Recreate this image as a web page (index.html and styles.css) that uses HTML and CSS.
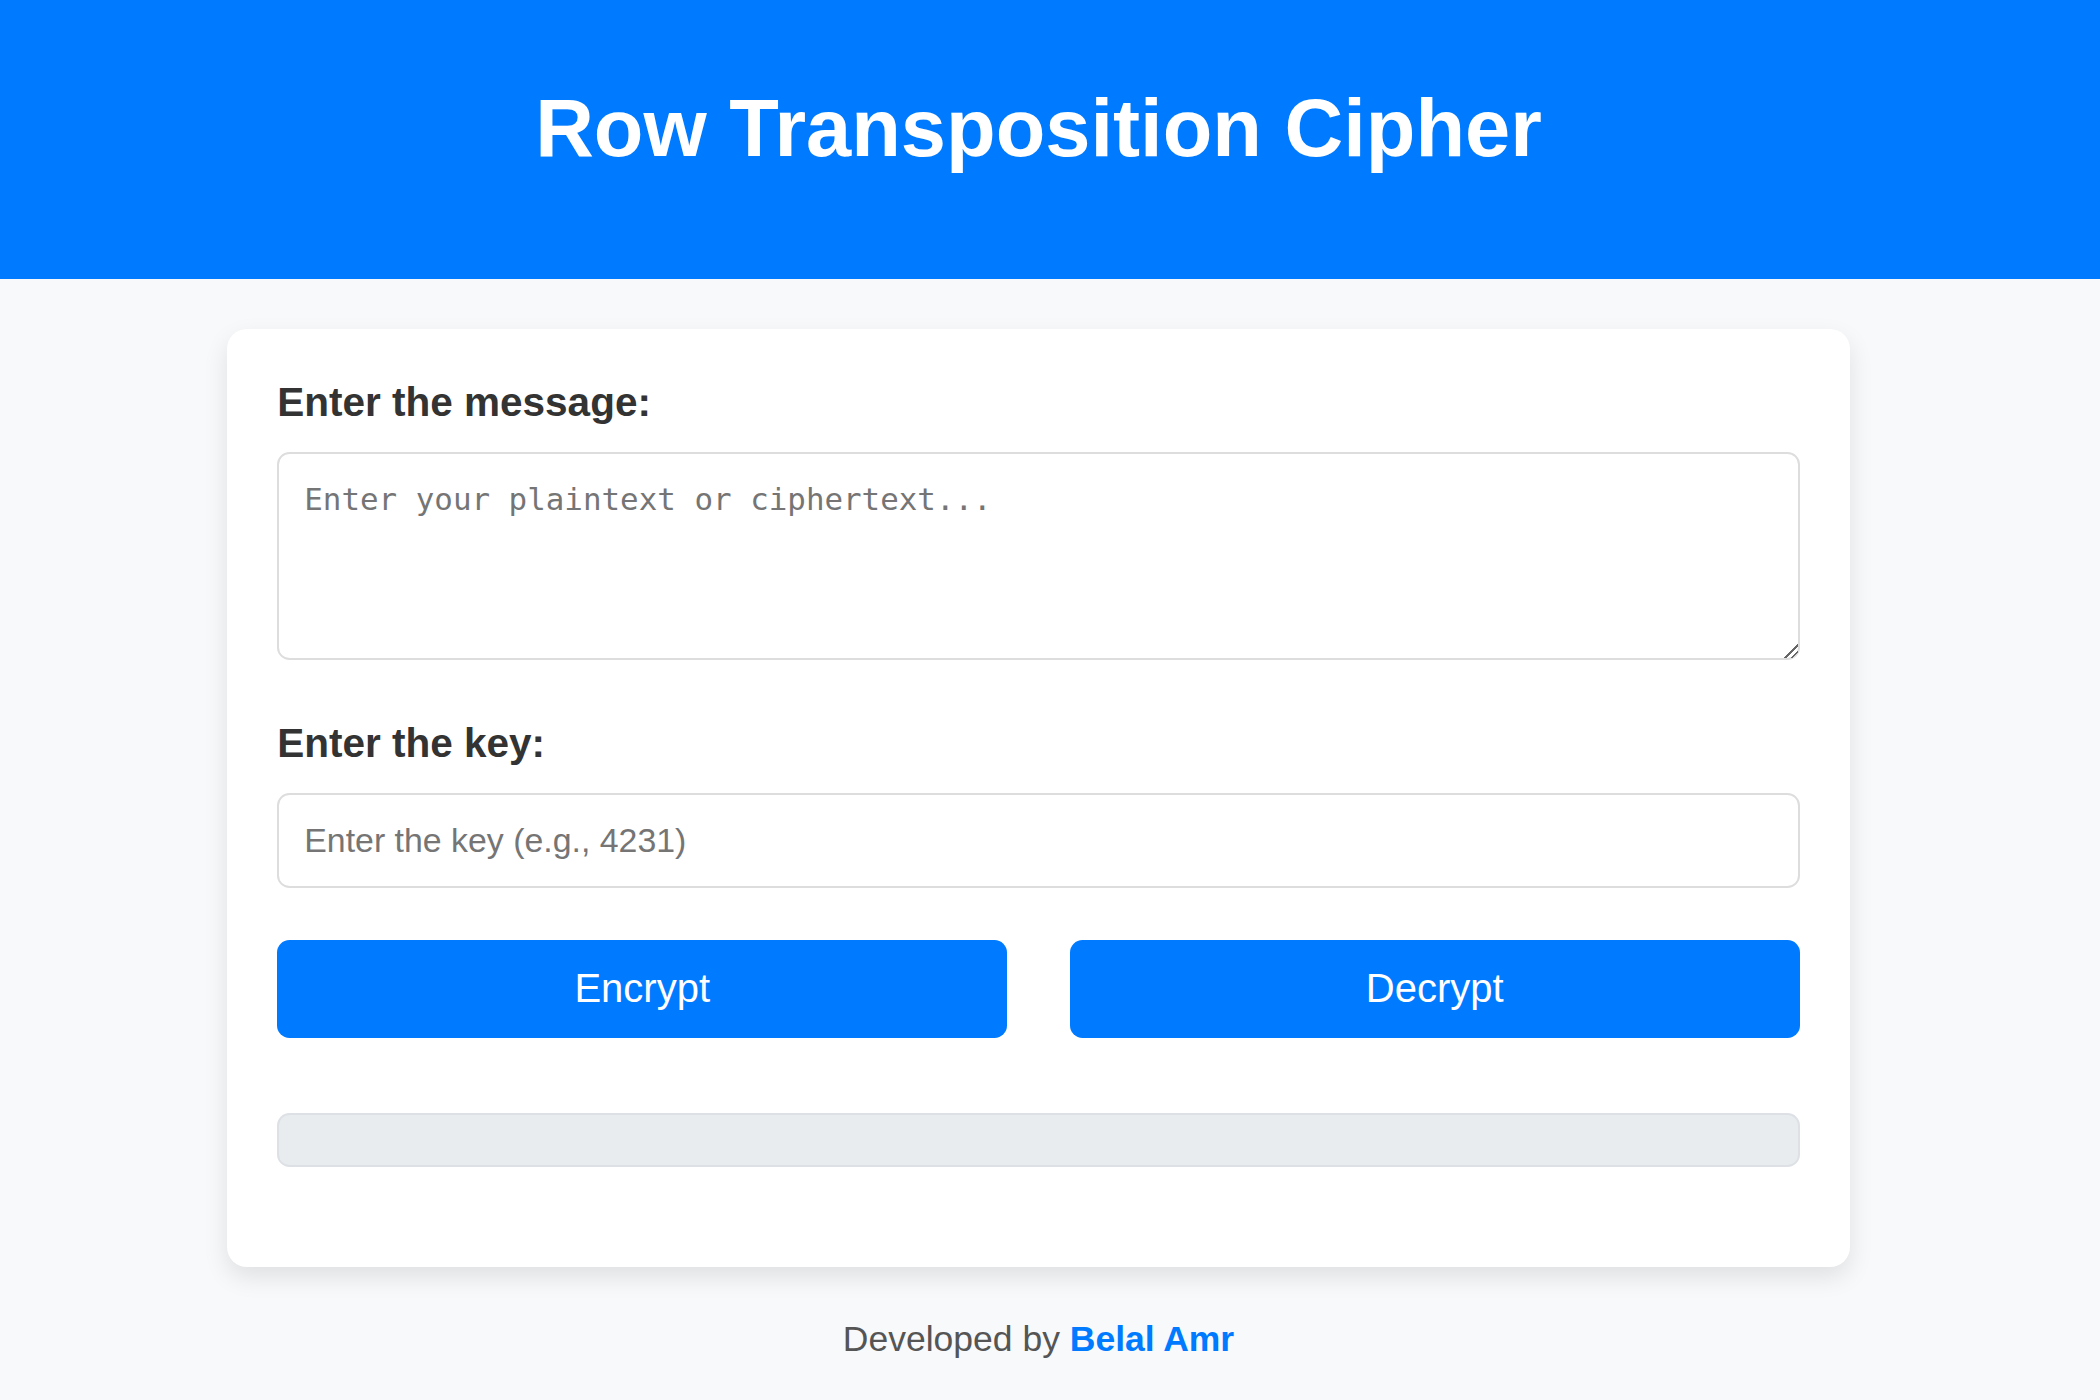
FILE: index.html
```html
<!DOCTYPE html>
<html lang="en">
<head>
<meta charset="UTF-8">
<title>Row Transposition Cipher</title>
<link rel="stylesheet" href="styles.css">
</head>
<body>
<header class="site-header">
  <h1 class="site-title">Row Transposition Cipher</h1>
</header>
<main class="page">
  <section class="card">
    <label class="field-label" for="message">Enter the message:</label>
    <textarea id="message" class="message-input" placeholder="Enter your plaintext or ciphertext..."></textarea>
    <label class="field-label" for="key">Enter the key:</label>
    <input id="key" class="key-input" type="text" placeholder="Enter the key (e.g., 4231)">
    <div class="actions">
      <button class="btn" type="button">Encrypt</button>
      <button class="btn" type="button">Decrypt</button>
    </div>
    <div class="result"></div>
  </section>
  <footer class="footer">Developed by <a class="footer-link" href="#">Belal Amr</a></footer>
</main>
</body>
</html>
```
FILE: styles.css
```css
html {
  zoom: 2.5;
  background: #f8f9fa;
}

body {
  margin: 0;
  font-family: "Liberation Sans", Arial, sans-serif;
  background: #f8f9fa;
  color: #333;
}

.site-header {
  background: #007bff;
  color: #fff;
  text-align: center;
  padding: 32.6px 9.2px 41.8px 0;
}

.site-title {
  margin: 0;
  font-size: 32.5px;
  font-weight: bold;
  line-height: 37px;
}

.page {
  padding-right: 9.2px;
}

.card {
  max-width: 609px;
  margin: 20px auto;
  padding: 20px;
  background: #fff;
  border-radius: 8px;
  box-shadow: 0 4px 10px rgba(0, 0, 0, 0.1);
}

.field-label {
  display: block;
  font-size: 16.2px;
  font-weight: bold;
  color: #333;
  margin-bottom: 10.5px;
}

.message-input {
  display: block;
  box-sizing: border-box;
  width: 100%;
  height: 83.3px;
  margin: 0 0 23.9px;
  padding: 11px 10px 10px;
  border: 1px solid #ddd;
  border-radius: 5px;
  font-family: "DejaVu Sans Mono", "Liberation Mono", monospace;
  font-size: 12.35px;
  color: #333;
  background: #fff;
}

.message-input::-webkit-resizer {
  background:
    linear-gradient(135deg,
      transparent 0 52%,
      #666 52% 60%,
      transparent 60% 74%,
      #666 74% 82%,
      transparent 82%);
}

.key-input {
  display: block;
  box-sizing: border-box;
  width: 100%;
  height: 37.8px;
  margin: 0 0 21px;
  padding: 10px;
  border: 1px solid #ddd;
  border-radius: 5px;
  font-family: "Liberation Sans", Arial, sans-serif;
  font-size: 13.55px;
  line-height: normal;
  color: #333;
  background: #fff;
}

.message-input::placeholder,
.key-input::placeholder {
  color: #757575;
}

.actions {
  display: flex;
  gap: 25px;
}

.btn {
  flex: 1;
  height: 39px;
  padding: 0 10px;
  border: none;
  border-radius: 5px;
  background: #007bff;
  color: #fff;
  font-family: "Liberation Sans", Arial, sans-serif;
  font-size: 16px;
  line-height: normal;
}

.result {
  margin: 30px 0 20px;
  padding: 10px;
  background: #e9ecef;
  border: 1px solid #dde1e5;
  border-radius: 5px;
}

.footer {
  text-align: center;
  font-size: 14.2px;
  color: #555;
  margin: 21px 0 20px;
}

.footer-link {
  color: #007bff;
  font-weight: bold;
  text-decoration: none;
}
```
